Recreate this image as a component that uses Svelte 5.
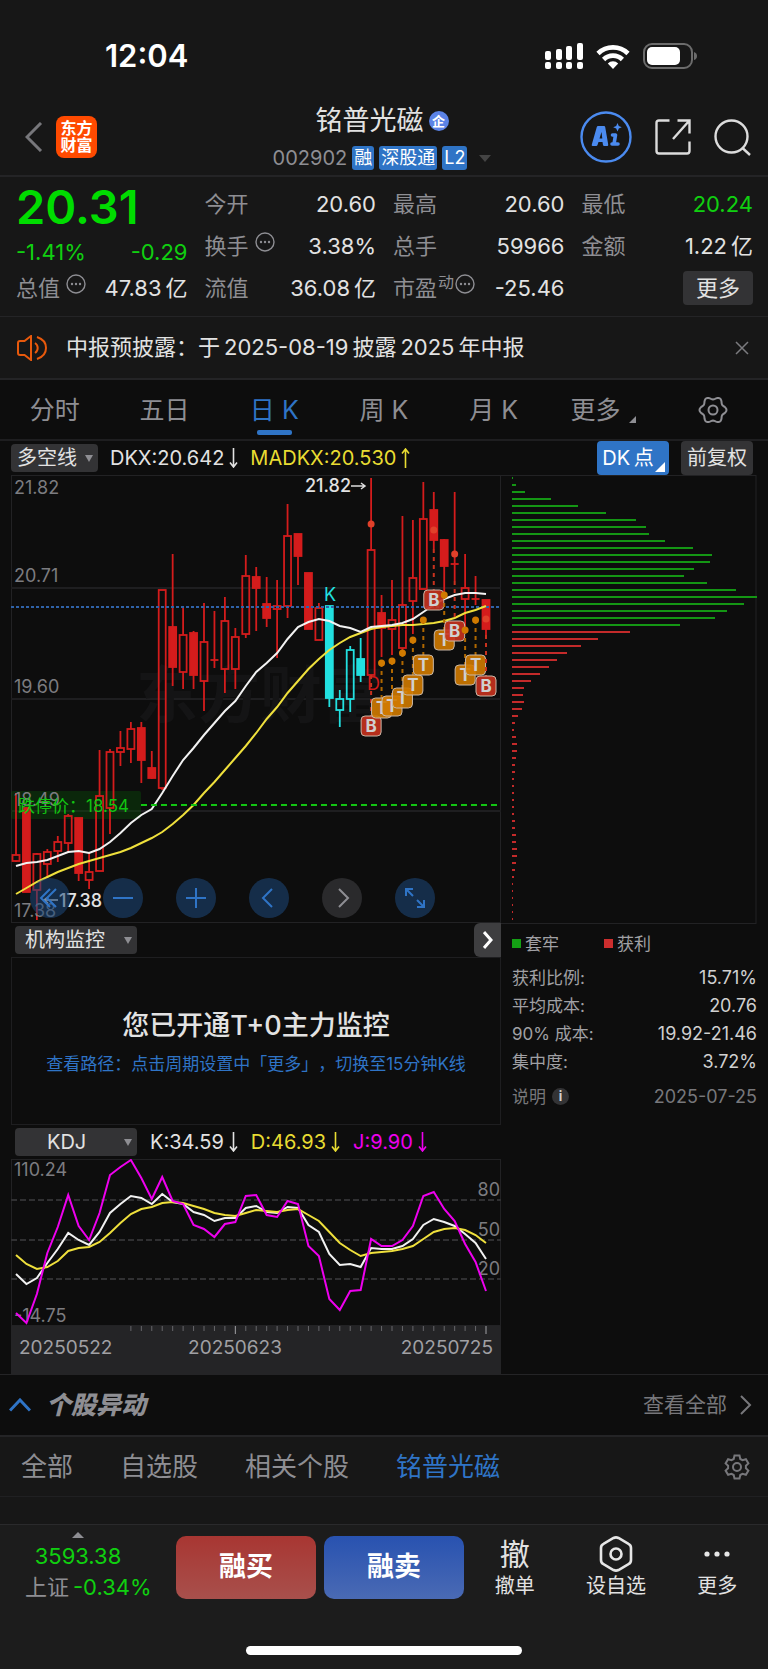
<script lang="ts">
    type Candle = [kind: string, high: number, top: number, bottom: number, low: number];

    // solid = filled body, hollow = outlined body, flat = open equals close
    const candles: Candle[] = [
        ['hollow', 793, 855, 861, 862], ['solid', 808, 808, 892, 892], ['hollow', 853, 854, 890, 920],
        ['hollow', 849, 852, 864, 878], ['hollow', 836, 842, 851, 862], ['hollow', 814, 816, 843, 852],
        ['solid', 818, 818, 873, 881], ['hollow', 852, 872, 880, 889], ['hollow', 750, 796, 871, 871],
        ['hollow', 749, 752, 808, 834], ['hollow', 731, 748, 752, 766], ['hollow', 722, 729, 749, 763],
        ['solid', 722, 728, 760, 783], ['solid', 751, 768, 778, 779], ['hollow', 590, 590, 788, 790],
        ['solid', 554, 627, 667, 686], ['hollow', 606, 635, 672, 689], ['solid', 631, 633, 675, 689],
        ['hollow', 603, 642, 681, 711], ['flat', 611, 660, 660, 668], ['hollow', 597, 621, 669, 693],
        ['hollow', 628, 637, 669, 689], ['hollow', 555, 576, 634, 638], ['solid', 567, 577, 588, 631],
        ['solid', 577, 604, 618, 627], ['hollow', 580, 606, 609, 658], ['hollow', 504, 536, 606, 618],
        ['solid', 534, 534, 556, 585], ['solid', 573, 573, 629, 629], ['hollow', 603, 608, 640, 640],
        ['solid cyan', 606, 606, 698, 707], ['hollow cyan', 690, 699, 710, 727], ['hollow cyan', 646, 650, 699, 712],
        ['solid cyan', 638, 659, 675, 682], ['hollow', 478, 550, 675, 675], ['solid', 595, 613, 628, 657],
        ['hollow', 580, 620, 629, 655], ['hollow', 516, 605, 648, 650], ['hollow', 520, 578, 601, 634],
        ['hollow', 482, 519, 589, 589], ['solid', 492, 510, 540, 549], ['solid', 539, 540, 566, 592],
        ['flat', 492, 564, 564, 581], ['hollow', 554, 588, 599, 627], ['flat', 576, 599, 599, 605],
        ['solid', 600, 600, 629, 635]
    ];
    const dkx = [
        866, 863, 862, 860, 856, 852, 851, 853, 849, 842, 833, 823, 815, 809, 793, 776, 760, 748, 735, 723, 711, 701,
        686, 672, 663, 653, 639, 627, 622, 619, 621, 626, 628, 632, 627, 626, 625, 623, 619, 612, 605, 599, 595, 593,
        593, 594
    ];
    const madkx = [
        894, 888, 882, 877, 872, 868, 864, 861, 858, 855, 852, 848, 843, 838, 832, 824, 815, 805, 793, 782, 770, 758,
        746, 733, 719, 707, 693, 681, 669, 659, 650, 643, 637, 633, 629, 627, 626, 625, 625, 624, 623, 621, 618, 613,
        610, 606
    ];
    // trade marks: candle index, kind, dot y, badge y
    const marks: [number, string, number, number][] = [
        [34, 'B', 524, 726], [35, 'T', 663, 708], [36, 'T', 661, 706], [37, 'T', 653, 698], [38, 'T', 640, 685],
        [39, 'T', 620, 665], [40, 'B', 530, 600], [41, 'T', 595, 640], [42, 'B', 554, 631], [43, 'T', 630, 675],
        [44, 'T', 620, 665], [45, 'B', 619, 686]
    ];
    const priceLabels: [string, number][] = [
        ['21.82', 494], ['20.71', 582], ['19.60', 693], ['18.49', 806], ['17.38', 917]
    ];

    const trapped = [
        1, 4, 13, 39, 66, 94, 124, 134, 137, 153, 181, 200, 198, 182, 172, 195, 224, 245, 232, 215, 203, 168
    ];
    const profit = [
        118, 86, 69, 55, 45, 37, 28, 19, 12, 11, 12, 10, 6, 3, 2, 4, 5, 5, 4, 3, 3, 2, 2, 2, 2, 2, 2, 3, 3, 4, 4, 5, 5,
        4, 3, 2, 1, 1, 1, 1, 1, 1
    ];
    const chips = [
        ...trapped.map((w) => ({ w, color: '#149614' })),
        ...profit.map((w) => ({ w, color: '#c42a2a' }))
    ];

    const kLine = [
        115, 125, 119, 104, 90, 74, 81, 86, 73, 54, 45, 37, 39, 45, 35, 43, 45, 53, 56, 62, 59, 59, 49, 47, 53, 54, 48,
        49, 66, 73, 95, 106, 105, 108, 89, 90, 90, 87, 80, 66, 60, 63, 67, 75, 84, 100
    ];
    const dLine = [
        96, 105, 110, 108, 102, 92, 89, 88, 83, 74, 64, 55, 50, 48, 44, 43, 44, 47, 50, 54, 56, 57, 54, 51, 52, 53, 51,
        50, 56, 62, 73, 84, 91, 97, 94, 93, 92, 90, 87, 80, 73, 70, 69, 71, 76, 84
    ];
    const jLine = [
        154, 164, 135, 94, 68, 36, 67, 81, 54, 16, 8, 1, 19, 40, 18, 42, 45, 66, 70, 78, 65, 63, 37, 36, 56, 58, 42, 45,
        87, 97, 140, 151, 132, 131, 80, 87, 87, 81, 67, 37, 33, 50, 62, 85, 103, 132
    ];

    const x = (i: number) => 5 + (i * 470) / 45;
    const points = (values: number[]) => values.map((v, i) => `${x(i)},${v}`).join(' ');

    // six-lobed settings wheel
    const wheel = Array.from({ length: 72 }, (_, i) => {
        const a = (i * Math.PI) / 36;
        const r = 12 + 1.5 * Math.cos(6 * a);
        return `${(15 + r * Math.cos(a)).toFixed(2)},${(14 + r * Math.sin(a)).toFixed(2)}`;
    }).join(' ');

    const periods = ['分时', '五日', '日 K', '周 K', '月 K', '更多'];
    let period = $state('日 K');

    const groups = ['全部', '自选股', '相关个股', '铭普光磁'];
    let group = $state('铭普光磁');

    const costs = [
        ['获利比例:', '15.71%'],
        ['平均成本:', '20.76'],
        ['90% 成本:', '19.92-21.46'],
        ['集中度:', '3.72%']
    ];

    let mainIndicator = $state('多空线');
    let subIndicator = $state('机构监控');
    let thirdIndicator = $state('KDJ');
    let noticeOpen = $state(true);
</script>

{#snippet info()}
    <svg class="info" viewBox="0 0 20 20" aria-hidden="true">
        <circle cx="10" cy="10" r="9" fill="none" stroke="currentColor" stroke-width="1.4" />
        <circle cx="6" cy="10" r="1.2" fill="currentColor" />
        <circle cx="10" cy="10" r="1.2" fill="currentColor" />
        <circle cx="14" cy="10" r="1.2" fill="currentColor" />
    </svg>
{/snippet}

{#snippet arrow(up: boolean)}
    <svg width="9" height="20" viewBox="0 0 9 20" fill="none" stroke="currentColor" stroke-width="1.6">
        {#if up}
            <path d="M4.5 20V1M1 5.5l3.500-4.500 3.500 4.500" />
        {:else}
            <path d="M4.5 0v19M1 14.5l3.500 4.500 3.500-4.500" />
        {/if}
    </svg>
{/snippet}

<div class="app">
    <div class="status">
        <span class="time">12:04</span>
        <div class="status-icons">
            <svg width="38" height="27" viewBox="0 0 38 27" fill="#fff">
                <rect x="0" y="8" width="6" height="9" rx="2" />
                <rect x="11" y="6" width="6" height="11" rx="2" />
                <rect x="21" y="3" width="6" height="14" rx="2" />
                <rect x="32" y="0" width="6" height="17" rx="2" />
                <rect x="0" y="19" width="6" height="7" rx="2" />
                <rect x="11" y="19" width="6" height="7" rx="2" />
                <rect x="21" y="19" width="6" height="7" rx="2" />
                <rect x="32" y="19" width="6" height="7" rx="2" />
            </svg>
            <svg width="34" height="25" viewBox="0 0 34 25" fill="none" stroke="#fff" stroke-width="4.6">
                <path d="M2 9.5a21.5 21.5 0 0 1 30 0" />
                <path d="M7.6 15.5a13.4 13.4 0 0 1 18.8 0" />
                <path d="M17 25l-5.2-5.6a7.4 7.4 0 0 1 10.4 0z" fill="#fff" stroke="none" />
            </svg>
            <svg width="54" height="26" viewBox="0 0 54 26">
                <rect x="1" y="1" width="48" height="24" rx="8" fill="none" stroke="#6c6c6c" stroke-width="2" />
                <rect x="4" y="4" width="33" height="18" rx="5" fill="#fff" />
                <path d="M51 9q3 1 3 4t-3 4z" fill="#6c6c6c" />
            </svg>
        </div>
    </div>

    <header>
        <div class="left">
            <button class="plain" aria-label="返回">
                <svg width="18" height="30" viewBox="0 0 18 30" fill="none" stroke="#77777b" stroke-width="3">
                    <path d="M16 1L2 15l14 14" />
                </svg>
            </button>
            <div class="logo"><span>东方</span><span>财富</span></div>
        </div>
        <div class="title">
            <h1>铭普光磁<span class="corp">企</span></h1>
            <div class="code">
                <span>002902</span>
                <span class="tag">融</span>
                <span class="tag">深股通</span>
                <span class="tag">L2</span>
                <svg width="12" height="7" viewBox="0 0 12 7" fill="#444"><path d="M0 0h12L6 7z" /></svg>
            </div>
        </div>
        <div class="actions">
            <button class="plain" aria-label="AI">
                <svg width="52" height="52" viewBox="0 0 52 52" fill="none" stroke="#4b8bf0">
                    <circle cx="26" cy="26" r="24.500" stroke-width="2.400" />
                    <path
                        d="M18 15h6q1 0 1.200 1l3 17.500q.2 1.500-1 1.500h-3q-1 0-1.200-1l-.5-3h-4l-1 3q-.3 1-1.300 1h-3.400q-1.500 0-1-1.500l5-17.500q.3-1 1.200-1zM21.500 21l-2 6.500h2.800z"
                        fill="#4b8bf0"
                        stroke="none"
                    />
                    <path d="M35.500 24l-1.500 9M32.500 24h3M32 33h6" stroke-width="3.600" stroke-linecap="round" stroke-linejoin="round" />
                    <path d="M37.500 12l1.300 3 3 1.200-3 1.300-1.300 3-1.300-3-3-1.300 3-1.200z" fill="#4b8bf0" stroke="none" />
                </svg>
            </button>
            <button class="plain" aria-label="分享">
                <svg width="36" height="36" viewBox="0 0 36 36" fill="none" stroke="#dcdcdc" stroke-width="2.400">
                    <path d="M14.500 1.500H4q-2.500 0-2.500 2.500v28q0 2.500 2.500 2.500h28q2.500 0 2.500-2.500V22.500" />
                    <path d="M22.500 1.500h12V14.500M34 2L18 20" />
                </svg>
            </button>
            <button class="plain" aria-label="搜索">
                <svg width="37" height="37" viewBox="0 0 37 37" fill="none" stroke="#dcdcdc" stroke-width="2.400">
                    <circle cx="17.500" cy="17.500" r="16" />
                    <path d="M28.500 29l7.500 7" />
                </svg>
            </button>
        </div>
    </header>

    <section class="quote">
        <div class="col">
            <strong class="price">20.31</strong>
            <div class="row change"><span>-1.41%</span><span>-0.29</span></div>
            <div class="row"><span class="name">总值{@render info()}</span><span>47.83&thinsp;亿</span></div>
        </div>
        <div class="col">
            <div class="row"><span class="name">今开</span><span>20.60</span></div>
            <div class="row"><span class="name">换手{@render info()}</span><span>3.38%</span></div>
            <div class="row"><span class="name">流值</span><span>36.08&thinsp;亿</span></div>
        </div>
        <div class="col">
            <div class="row"><span class="name">最高</span><span>20.60</span></div>
            <div class="row"><span class="name">总手</span><span>59966</span></div>
            <div class="row"><span class="name tight">市盈<sup>动</sup>{@render info()}</span><span>-25.46</span></div>
        </div>
        <div class="col">
            <div class="row"><span class="name">最低</span><span class="down">20.24</span></div>
            <div class="row"><span class="name">金额</span><span>1.22&thinsp;亿</span></div>
            <div class="row end"><button class="more">更多</button></div>
        </div>
    </section>

    {#if noticeOpen}
        <div class="notice">
            <svg width="31" height="26" viewBox="0 0 31 26" fill="none" stroke="#e8590c" stroke-width="2">
                <path d="M14 1v24l-6.500-5H3q-2 0-2-2V8q0-2 2-2h4.500z" />
                <path d="M18 8a6 6 0 0 1 0 10M20 2q9 3 9 11t-9 11" />
            </svg>
            <p>中报预披露：于&thinsp;2025-08-19&thinsp;披露&thinsp;2025&thinsp;年中报</p>
            <button class="plain" aria-label="关闭" onclick={() => (noticeOpen = false)}>
                <svg width="14" height="14" viewBox="0 0 14 14" stroke="#7b7b7f" stroke-width="1.500">
                    <path d="M1 1l12 12M13 1L1 13" />
                </svg>
            </button>
        </div>
    {/if}

    <nav class="periods">
        {#each periods as p}
            <button class:active={p === period} onclick={() => (period = p)}>
                {p}
                {#if p === '更多'}
                    <svg class="corner" width="7" height="7" viewBox="0 0 7 7" fill="#8e8e93"><path d="M7 0v7H0z" /></svg>
                {/if}
            </button>
        {/each}
        <button aria-label="设置">
            <svg width="30" height="28" viewBox="0 0 30 28" fill="none" stroke="#8e8e93" stroke-width="2">
                <polygon points={wheel} />
                <circle cx="15" cy="14" r="4.500" />
            </svg>
        </button>
    </nav>

    <div class="toolbar main-toolbar">
        <div class="picker small">
            <select bind:value={mainIndicator} aria-label="主图指标">
                <option>多空线</option>
            </select>
        </div>
        <span class="value">DKX:20.642{@render arrow(false)}</span>
        <span class="value yellow">MADKX:20.530{@render arrow(true)}</span>
        <button class="chip blue">DK&thinsp;点<i></i></button>
        <button class="chip">前复权</button>
    </div>

    <main>
        <div class="charts">
            <div class="kchart">
                <svg viewBox="0 475 490 448" role="img" aria-label="日K线图">
                    <rect x="0.500" y="475.500" width="489" height="447" fill="none" stroke="#222224" />
                    <path d="M0 588h490M0 699h490M0 811h490" stroke="#1e1e20" stroke-width="2" />
                    <text x="125" y="718" class="watermark">东方财富</text>
                    <rect x="0" y="791" width="130" height="28" rx="2" fill="#0a5a0a" fill-opacity="0.350" />
                    {#each candles as [kind, high, top, bottom, low], i}
                        <g class="candle {kind}">
                            <path d="M{x(i)} {high}V{top}M{x(i)} {bottom}V{low}" />
                            {#if kind === 'flat'}
                                <path d="M{x(i) - 4} {top}h8" />
                            {:else}
                                <rect x={x(i) - 3.5} y={top} width="7" height={bottom - top} />
                            {/if}
                        </g>
                    {/each}
                    {#each priceLabels as [label, y]}
                        <text x="3" {y} class="axis">{label}</text>
                    {/each}
                    <path d="M0 607h490" stroke="#2f62a8" stroke-width="2" stroke-dasharray="3 2" />
                    <polyline points={points(madkx)} class="line" stroke="#efe03c" />
                    <polyline points={points(dkx)} class="line" stroke="#f2f2f2" />
                    <text x="313" y="601" class="letter" fill="#22e0e0">K</text>
                    <text x="356" y="690" class="letter" fill="#d01a1a">D</text>
                    {#each marks as [i, kind, dot, badge]}
                        <g class={kind === 'B' ? 'buy' : 'trade'}>
                            <path d="M{x(i)} {Math.max(dot, candles[i][4])}V{badge - 10}" stroke-dasharray="4 4" />
                            <circle cx={x(i)} cy={dot} r="3.500" />
                            <rect x={x(i) - 10} y={badge - 10} width="20" height="20" rx="4" />
                            <text x={x(i)} y={badge + 6}>{kind}</text>
                        </g>
                    {/each}
                    <text x="294" y="492" class="extreme">21.82</text>
                    <path d="M340 486h14M350 483l4 3-4 3" fill="none" stroke="#ddd" stroke-width="1.500" />
                    <path d="M130 805h360" stroke="#12c412" stroke-width="2" stroke-dasharray="6 4" />
                    <text x="7" y="812" class="limit">跌停价：18.54</text>
                    <path d="M47 900H33M37 897l-4 3 4 3" fill="none" stroke="#ddd" stroke-width="1.500" />
                    <text x="48" y="907" class="extreme">17.38</text>
                </svg>
                <div class="controls">
                    <button aria-label="最早">
                        <svg viewBox="0 0 40 40"><path d="M20 11l-9 9 9 9M26 11l-9 9 9 9" /></svg>
                    </button>
                    <button aria-label="缩小">
                        <svg viewBox="0 0 40 40"><path d="M10 20h20" /></svg>
                    </button>
                    <button aria-label="放大">
                        <svg viewBox="0 0 40 40"><path d="M10 20h20M20 10v20" /></svg>
                    </button>
                    <button aria-label="向左">
                        <svg viewBox="0 0 40 40"><path d="M23 11l-9 9 9 9" /></svg>
                    </button>
                    <button class="off" aria-label="向右">
                        <svg viewBox="0 0 40 40"><path d="M17 11l9 9-9 9" /></svg>
                    </button>
                    <button aria-label="全屏">
                        <svg viewBox="0 0 40 40"><path d="M11 18v-7h7M11 11l7 7M29 22v7h-7M29 29l-7-7" /></svg>
                    </button>
                </div>
            </div>

            <div class="toolbar">
                <div class="picker">
                    <select bind:value={subIndicator} aria-label="副图指标">
                        <option>机构监控</option>
                    </select>
                </div>
                <button class="next" aria-label="展开">
                    <svg width="10" height="18" viewBox="0 0 10 18" fill="none" stroke="#fff" stroke-width="3">
                        <path d="M1 1l7 8-7 8" />
                    </svg>
                </button>
            </div>
            <div class="monitor">
                <h2>您已开通T+0主力监控</h2>
                <p>查看路径：点击周期设置中「更多」，切换至15分钟K线</p>
            </div>

            <div class="toolbar">
                <div class="picker">
                    <select class="center" bind:value={thirdIndicator} aria-label="第三指标">
                        <option>KDJ</option>
                    </select>
                </div>
                <span class="value">K:34.59{@render arrow(false)}</span>
                <span class="value yellow">D:46.93{@render arrow(false)}</span>
                <span class="value magenta">J:9.90{@render arrow(false)}</span>
            </div>
            <svg class="kdj" viewBox="0 0 490 215" role="img" aria-label="KDJ 指标图">
                <rect x="0.500" y="0.500" width="489" height="166" fill="none" stroke="#222224" />
                <rect x="0" y="167" width="490" height="48" fill="#242426" />
                <path d="M0 41h490M0 81h490M0 120h490" stroke="#303032" stroke-width="2" stroke-dasharray="6 3" />
                <text x="3" y="17" class="axis">110.24</text>
                <text x="3" y="163" class="axis">-14.75</text>
                <text x="489" y="37" class="axis right">80</text>
                <text x="489" y="77" class="axis right">50</text>
                <text x="489" y="116" class="axis right">20</text>
                <polyline points={points(kLine)} class="line" stroke="#f2f2f2" />
                <polyline points={points(dLine)} class="line" stroke="#efe03c" />
                <polyline points={points(jLine)} class="line" stroke="#ee00ee" />
                {#each kLine as _, i}
                    {#if i > 10}
                        <path
                            d="M{x(i)} 167v{i === 21 || i === 45 ? 8 : 5}"
                            stroke={i === 21 || i === 45 ? '#a0a0a4' : '#66666a'}
                        />
                    {/if}
                {/each}
                <text x="8" y="195" class="date">20250522</text>
                <text x="224" y="195" class="date middle">20250623</text>
                <text x="482" y="195" class="date right">20250725</text>
            </svg>
        </div>

        <aside>
            <svg viewBox="0 475 256 449" role="img" aria-label="筹码分布">
                <rect x="-1" y="475.500" width="256" height="448" fill="none" stroke="#222224" stroke-width="1" />
                {#each chips as chip, i}
                    <rect x="11" y={477 + i * 7} width={chip.w} height="2" fill={chip.color} />
                {/each}
            </svg>
            <div class="legend">
                <span><i class="green"></i>套牢</span>
                <span><i class="red"></i>获利</span>
            </div>
            <dl>
                {#each costs as [label, value]}
                    <div><dt>{label}</dt><dd>{value}</dd></div>
                {/each}
            </dl>
            <div class="note">
                <span>说明<b>i</b></span>
                <time>2025-07-25</time>
            </div>
        </aside>
    </main>

    <section class="moves">
        <svg width="22" height="14" viewBox="0 0 22 14" fill="none" stroke="#2f74c6" stroke-width="3">
            <path d="M1 12.500L11 2l10 10.500" />
        </svg>
        <h3>个股异动</h3>
        <a href="#all">
            查看全部
            <svg width="12" height="20" viewBox="0 0 12 20" fill="none" stroke="#77777b" stroke-width="2">
                <path d="M1 1l9 9-9 9" />
            </svg>
        </a>
    </section>

    <nav class="groups">
        {#each groups as g}
            <button class:active={g === group} onclick={() => (group = g)}>{g}</button>
        {/each}
        <button class="gear" aria-label="设置">
            <svg width="26" height="26" viewBox="0 0 26 26" fill="none" stroke="#77777b" stroke-width="2">
                <path d="M10.500 1.500h5l.8 3.500 2.200 1.200 3.400-1 2.500 4.200-2.500 2.400v2.400l2.500 2.400-2.500 4.200-3.400-1-2.200 1.200-.8 3.500h-5l-.8-3.500-2.200-1.200-3.400 1-2.500-4.200 2.500-2.400v-2.400L1.600 9.400l2.500-4.200 3.400 1L9.700 5z" />
                <circle cx="13" cy="13" r="4" />
            </svg>
        </button>
    </nav>
    <div class="spacer"></div>

    <footer>
        <div class="bar">
            <div class="index">
                <svg width="12" height="6" viewBox="0 0 12 6" fill="#8e8e93"><path d="M6 0l6 6H0z" /></svg>
                <span class="down">3593.38</span>
                <span class="market">上证&thinsp;<span class="down">-0.34%</span></span>
            </div>
            <button class="trade-btn buy-btn">融买</button>
            <button class="trade-btn sell-btn">融卖</button>
            <div class="links">
                <button><span class="glyph">撤</span>撤单</button>
                <button>
                    <span class="glyph">
                        <svg width="34" height="36" viewBox="0 0 34 36" fill="none" stroke="#e6e6e6" stroke-width="2.600">
                            <path d="M14.500 2q2.500-1.200 5 0l10 5.800Q32 9 32 12v12q0 3-2.500 4.200l-10 5.800q-2.500 1.200-5 0l-10-5.800Q2 27 2 24V12q0-3 2.500-4.200z" />
                            <circle cx="17" cy="18" r="5.500" />
                        </svg>
                    </span>
                    设自选
                </button>
                <button>
                    <span class="glyph">
                        <svg width="26" height="6" viewBox="0 0 26 6" fill="#e6e6e6">
                            <circle cx="3" cy="3" r="2.600" /><circle cx="13" cy="3" r="2.600" /><circle cx="23" cy="3" r="2.600" />
                        </svg>
                    </span>
                    更多
                </button>
            </div>
        </div>
        <div class="home"></div>
    </footer>
</div>

<style>
    :global(body) {
        background: #0d0d0d;
    }

    .app {
        font-family: Inter, "Noto Sans CJK SC", sans-serif;
        color: #e2e2e2;
        background: #0d0d0d;
        font-size: 22px;
        line-height: 1.2;
    }

    .app * {
        box-sizing: border-box;
    }

    svg {
        display: block;
        flex: none;
    }

    button, select {
        font: inherit;
        color: inherit;
        border: none;
        background: none;
        padding: 0;
        cursor: pointer;
    }

    h1, h2, h3, p, dl, dd {
        margin: 0;
    }

    .down {
        color: #10d010;
    }

    .yellow {
        color: #e8dc32;
    }

    .magenta {
        color: #ee00ee;
    }

    /* status bar and header */
    .status {
        height: 96px;
        padding: 16px 71px 0 105px;
        display: flex;
        justify-content: space-between;
        align-items: center;
        background: #171717;
    }

    .time {
        font-size: 31px;
        font-weight: 600;
        color: #fff;
    }

    .status-icons {
        display: flex;
        align-items: center;
        gap: 13px;
    }

    header {
        height: 81px;
        padding: 3px 17px 0;
        display: grid;
        grid-template-columns: 1fr auto 1fr;
        align-items: center;
        background: #171717;
        border-bottom: 2px solid #242426;
    }

    .left, .actions {
        display: flex;
        align-items: center;
    }

    .left {
        gap: 13px;
        padding-left: 8px;
    }

    .actions {
        gap: 23px;
        justify-content: flex-end;
    }

    .logo {
        width: 41px;
        height: 42px;
        border-radius: 8px;
        background: #ff4a00;
        color: #fff;
        font-size: 16px;
        font-weight: 700;
        line-height: 17px;
        display: flex;
        flex-direction: column;
        align-items: center;
        justify-content: center;
    }

    .title {
        display: flex;
        flex-direction: column;
        align-items: center;
        gap: 8px;
        padding-right: 4px;
    }

    h1 {
        font-size: 27px;
        font-weight: 400;
        line-height: 34px;
        display: flex;
        align-items: center;
        gap: 5px;
    }

    .corp {
        width: 20px;
        height: 20px;
        border-radius: 50%;
        background: #5b83e6;
        color: #fff;
        font-size: 13px;
        font-weight: 700;
        line-height: 20px;
        text-align: center;
    }

    .code {
        display: flex;
        align-items: center;
        gap: 5px;
        height: 24px;
        font-size: 20px;
        color: #8e8e93;
    }

    .tag {
        height: 24px;
        line-height: 24px;
        padding: 0 2px;
        border-radius: 3px;
        background: #2f74c6;
        color: #fff;
        font-size: 18px;
    }

    .code svg {
        margin-left: 7px;
    }

    /* quote */
    .quote {
        display: grid;
        grid-template-columns: repeat(4, 1fr);
        gap: 17px;
        align-items: end;
        padding: 0 15px 7px 16px;
        background: #171717;
        border-bottom: 1px solid #242426;
    }

    .row {
        display: flex;
        justify-content: space-between;
        align-items: center;
        height: 42px;
        white-space: nowrap;
    }

    .price {
        display: block;
        height: 60px;
        line-height: 60px;
        font-size: 47px;
        font-weight: 600;
        color: #00dc00;
    }

    .change {
        height: 30px;
        color: #10d010;
    }

    .name {
        display: flex;
        align-items: center;
        gap: 6px;
        color: #8e8e93;
    }

    .tight {
        gap: 1px;
    }

    sup {
        font-size: 16px;
        line-height: 16px;
        align-self: flex-start;
    }

    .info {
        width: 20px;
        height: 20px;
        margin-bottom: 8px;
    }

    .end {
        justify-content: flex-end;
    }

    .more {
        width: 70px;
        height: 34px;
        border-radius: 4px;
        background: #333335;
    }

    .notice {
        display: flex;
        align-items: center;
        gap: 18px;
        height: 63px;
        padding: 0 19px 0 17px;
        background: #171717;
        border-bottom: 2px solid #242426;
    }

    .notice p {
        flex: 1;
    }

    /* period tabs */
    .periods {
        display: grid;
        grid-template-columns: repeat(7, 1fr);
        height: 61px;
        border-bottom: 2px solid #1e1e20;
        color: #8e8e93;
        font-size: 25px;
    }

    .periods button {
        position: relative;
        display: flex;
        align-items: center;
        justify-content: center;
        gap: 9px;
    }

    .corner {
        margin-top: 20px;
    }

    .periods .active {
        color: #2f74c6;
    }

    .periods .active::after {
        content: "";
        position: absolute;
        bottom: 4px;
        width: 35px;
        height: 5px;
        border-radius: 2px;
        background: #2f74c6;
    }

    /* toolbars */
    .toolbar {
        display: flex;
        align-items: center;
        gap: 13px;
        height: 34px;
        padding-left: 4px;
        font-size: 20px;
        white-space: nowrap;
    }

    .main-toolbar {
        gap: 12px;
        padding: 0 15px 0 11px;
    }

    .value {
        display: flex;
        align-items: center;
        gap: 5px;
    }

    .picker {
        position: relative;
        width: 122px;
        height: 28px;
        border-radius: 4px;
        background: #333335;
    }

    .picker.small {
        width: 87px;
    }

    .picker::after {
        content: "";
        position: absolute;
        right: 5px;
        top: 11px;
        border: 4px solid transparent;
        border-top: 7px solid #8e8e93;
        border-bottom: none;
        pointer-events: none;
    }

    select {
        appearance: none;
        width: 100%;
        height: 28px;
        padding-left: 10px;
    }

    .small select {
        padding-left: 6px;
    }

    select.center {
        padding-left: 32px;
    }

    .chip {
        position: relative;
        width: 72px;
        height: 34px;
        border-radius: 4px;
        background: #333335;
    }

    .chip.blue {
        margin-left: auto;
        padding-right: 10px;
        background: #2f74c6;
        color: #fff;
    }

    .chip i {
        position: absolute;
        right: 4px;
        bottom: 3px;
        border-left: 10px solid transparent;
        border-bottom: 10px solid #fff;
    }

    /* charts */
    main {
        display: grid;
        grid-template-columns: 490fr 256fr;
        padding: 0 11px;
        border-bottom: 1px solid #242426;
    }

    .kchart {
        position: relative;
    }

    .kchart > svg, .kdj, aside > svg {
        width: 100%;
    }

    .watermark {
        font-size: 62px;
        font-weight: 700;
        fill: #141415;
    }

    .axis {
        font-size: 18px;
        fill: #7c7c80;
    }

    .right {
        text-anchor: end;
    }

    .middle {
        text-anchor: middle;
    }

    .date {
        font-size: 19px;
        fill: #a0a0a4;
    }

    .candle {
        stroke: #d41c1c;
        stroke-width: 1.8;
        fill: none;
    }

    .candle.solid {
        fill: #d41c1c;
    }

    .candle.cyan {
        stroke: #22e0e0;
    }

    .candle.solid.cyan {
        fill: #22e0e0;
    }

    .line {
        fill: none;
        stroke-width: 2;
    }

    .letter {
        font-size: 18px;
    }

    .extreme {
        font-size: 18px;
        font-weight: 500;
        fill: #e2e2e2;
    }

    .limit {
        font-size: 17px;
        fill: #12c412;
    }

    .buy path {
        stroke: #c8321e;
        stroke-width: 2;
    }

    .buy circle {
        fill: #e0402a;
    }

    .trade path {
        stroke: #b06800;
        stroke-width: 2;
    }

    .trade circle {
        fill: #d07a00;
    }

    .buy rect, .trade rect {
        fill: #c8321e;
        fill-opacity: 0.9;
        stroke: #c9b8a8;
    }

    .trade rect {
        fill: #d07a00;
    }

    .buy text, .trade text {
        font-size: 17px;
        font-weight: 700;
        fill: #d0d0d0;
        text-anchor: middle;
    }

    .controls {
        position: absolute;
        left: 19px;
        bottom: 5px;
        display: flex;
        gap: 33px;
    }

    .controls button {
        width: 40px;
        height: 40px;
        border-radius: 50%;
        background: rgba(30, 72, 124, 0.55);
    }

    .controls path {
        fill: none;
        stroke: #2f74c6;
        stroke-width: 2;
    }

    .controls .off {
        background: #2a2a2c;
    }

    .controls .off path {
        stroke: #8e8e93;
    }

    .next {
        display: flex;
        align-items: center;
        justify-content: center;
        width: 27px;
        height: 34px;
        margin-left: auto;
        border-radius: 6px 0 0 6px;
        background: #3e3e40;
    }

    .monitor {
        height: 168px;
        display: flex;
        flex-direction: column;
        align-items: center;
        justify-content: center;
        gap: 6px;
        padding-top: 4px;
        border: 1px solid #1e1e20;
        white-space: nowrap;
    }

    h2 {
        font-size: 27px;
        line-height: 36px;
        font-weight: 500;
    }

    .monitor p {
        font-size: 17px;
        line-height: 28px;
        color: #2f74c6;
        text-spacing-trim: space-all;
    }

    /* cost panel */
    aside {
        font-size: 17px;
        color: #a0a0a4;
    }

    .legend {
        display: grid;
        grid-template-columns: 92px 1fr;
        align-items: center;
        height: 40px;
        padding-left: 11px;
    }

    .legend span {
        display: flex;
        align-items: center;
        gap: 4px;
    }

    .legend i {
        width: 9px;
        height: 9px;
    }

    .green {
        background: #14a014;
    }

    .red {
        background: #cc2e2e;
    }

    dl div, .note {
        display: flex;
        justify-content: space-between;
        align-items: center;
        height: 28px;
        padding-left: 11px;
    }

    dd {
        color: #d0d0d0;
        font-size: 18px;
    }

    .note {
        height: 42px;
        color: #77777b;
    }

    .note span {
        display: flex;
        align-items: center;
        gap: 6px;
    }

    .note b {
        width: 17px;
        height: 17px;
        border-radius: 50%;
        background: #333335;
        color: #d0d0d0;
        font-size: 13px;
        line-height: 17px;
        text-align: center;
    }

    .note time {
        font-size: 18px;
    }

    /* stock moves */
    .moves {
        display: flex;
        align-items: center;
        height: 62px;
        padding: 0 16px 0 9px;
        gap: 15px;
        border-bottom: 2px solid #242426;
    }

    h3 {
        font-size: 25px;
        font-weight: 900;
        font-style: italic;
        color: #8e8e93;
    }

    .moves a {
        display: flex;
        align-items: center;
        gap: 13px;
        margin-left: auto;
        color: #77777b;
        text-decoration: none;
        font-size: 21px;
    }

    .groups {
        display: flex;
        align-items: center;
        gap: 47px;
        height: 60px;
        padding: 0 18px 0 21px;
        background: #171717;
        border-bottom: 1px solid #202022;
        color: #8e8e93;
        font-size: 26px;
    }

    .groups .active {
        color: #2f74c6;
    }

    .gear {
        margin-left: auto;
    }

    .spacer {
        height: 27px;
        background: #171717;
    }

    footer {
        padding: 7px 0 14px;
        background: #1c1c1c;
        border-top: 1px solid #2a2a2c;
    }

    .bar {
        display: flex;
        align-items: center;
        height: 71px;
    }

    .index {
        display: flex;
        flex-direction: column;
        align-items: center;
        width: 168px;
        padding-right: 12px;
        line-height: 31px;
        color: #8e8e93;
        white-space: nowrap;
    }

    .index svg {
        margin-bottom: 3px;
    }

    .market {
        align-self: flex-start;
        padding-left: 25px;
    }

    .trade-btn {
        flex: 1;
        height: 63px;
        margin-left: 8px;
        border-radius: 10px;
        color: #fff;
        font-size: 27px;
        font-weight: 700;
    }

    .buy-btn {
        background: linear-gradient(#a83632, #a8504c);
    }

    .sell-btn {
        background: linear-gradient(#2852b0, #4a6ab4);
    }

    .links {
        display: grid;
        grid-template-columns: repeat(3, 1fr);
        width: 304px;
    }

    .links button {
        display: flex;
        flex-direction: column;
        align-items: center;
        font-size: 20px;
        line-height: 28px;
    }

    .glyph {
        display: flex;
        align-items: center;
        height: 36px;
        font-size: 30px;
    }

    .home {
        width: 36%;
        height: 9px;
        margin: 43px auto 0;
        border-radius: 5px;
        background: #fff;
    }
</style>
